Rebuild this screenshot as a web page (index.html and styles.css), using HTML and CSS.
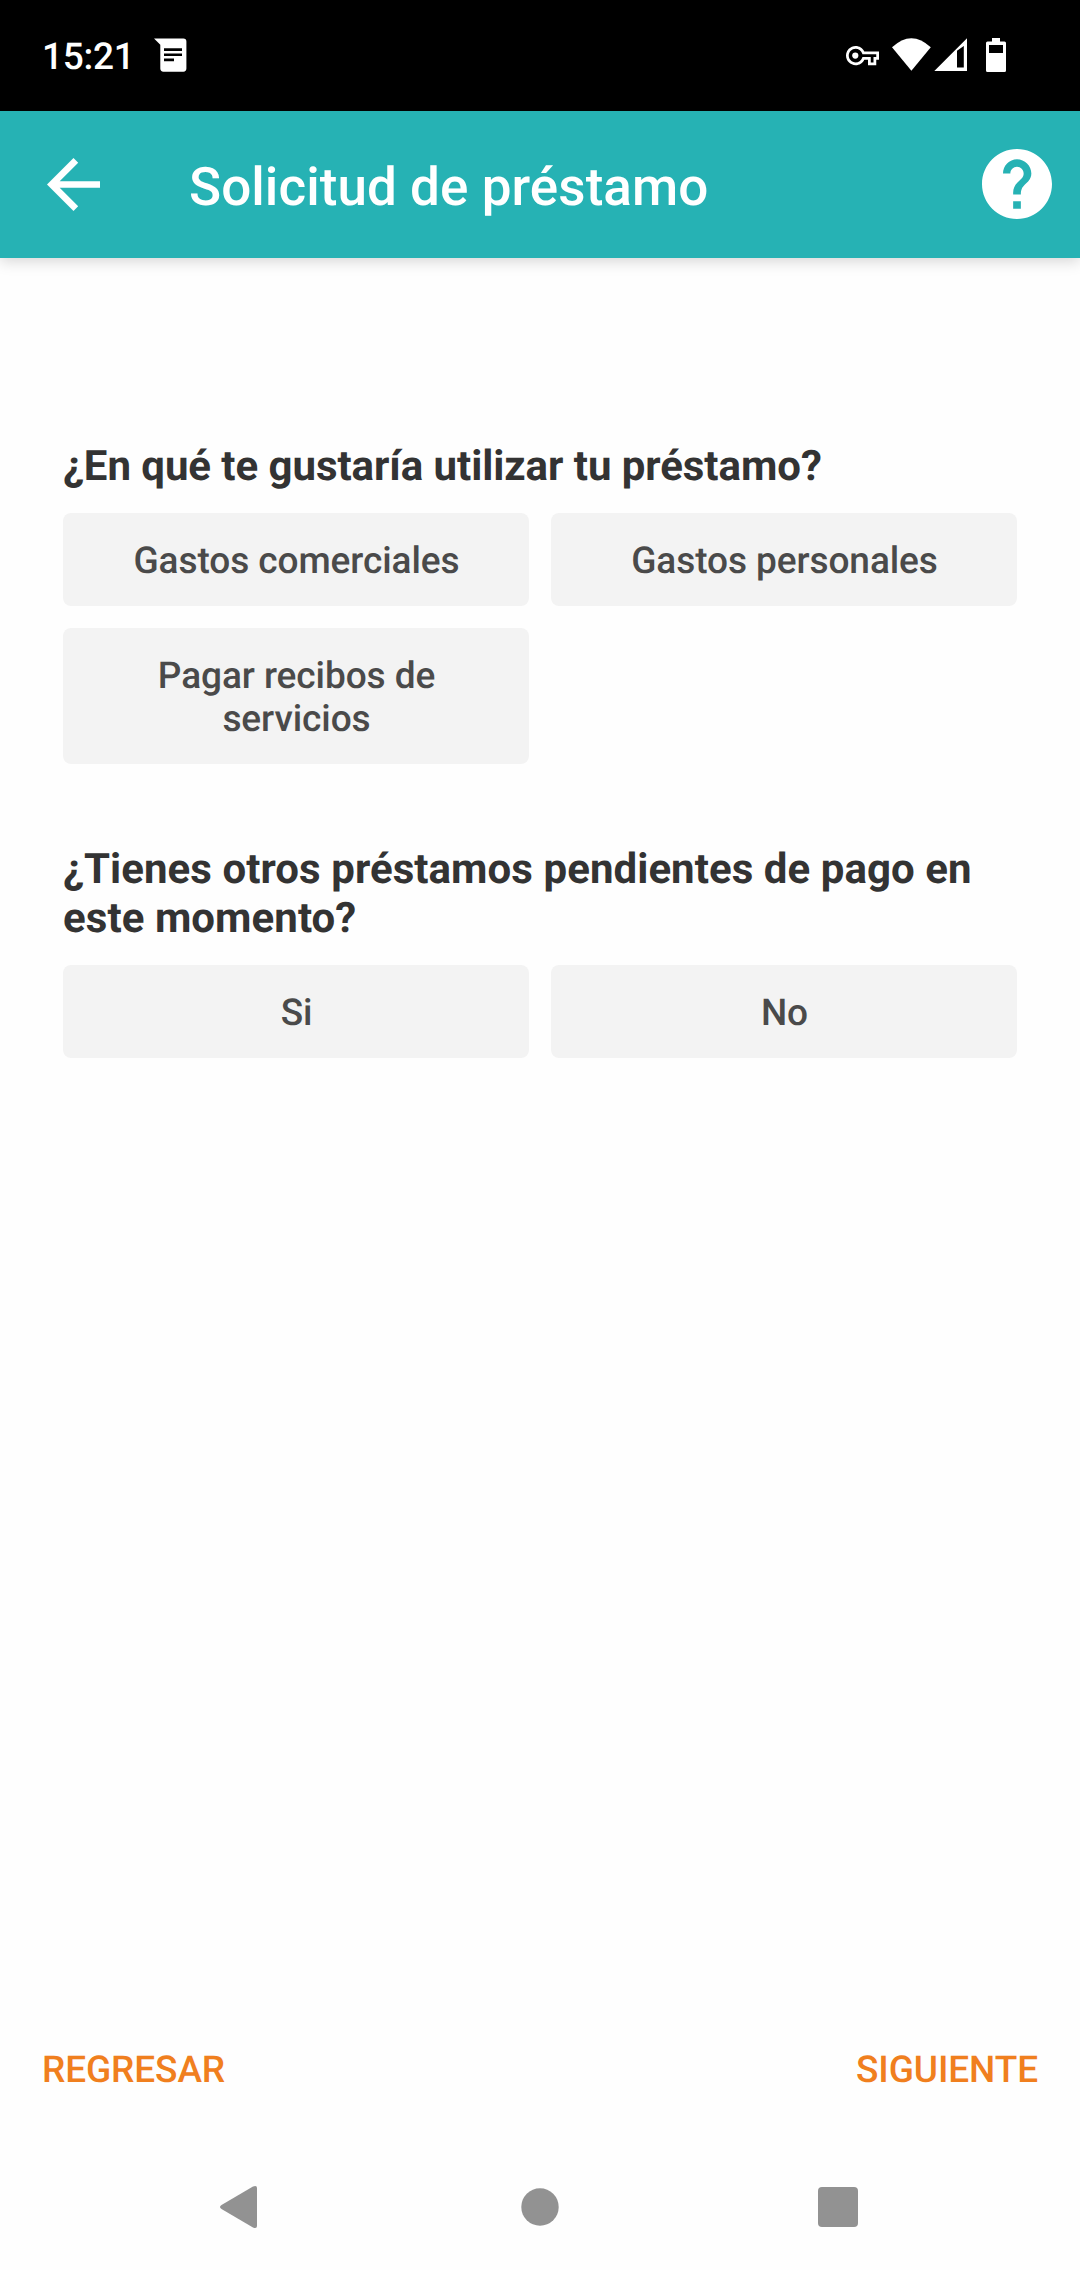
FILE: index.html
```html
<!DOCTYPE html>
<html lang="es">
<head>
<meta charset="utf-8">
<title>Solicitud de préstamo</title>
<link rel="stylesheet" href="styles.css">
</head>
<body>
<div class="status">
  <span class="clock">15:21</span>
  <svg class="note" width="33" height="35" viewBox="0 0 33 35"><path fill="#fff" fill-rule="evenodd" d="M0 .4H29.300Q32.400 .4 32.400 3.500V30.600Q32.400 33.700 29.300 33.700H9.400Q6.300 33.700 6.300 30.600V6.700ZM10 10.300V13H28V10.300ZM10 15.400V18.100H28V15.400ZM10 20.500V23.200H20V20.500Z"/></svg>
  <svg class="signals" width="162" height="35" viewBox="0 0 162 35" fill="#fff" fill-rule="evenodd">
    <path transform="translate(0 1.100) scale(1.375)" d="M22 19h-6v-4h-2.680c-1.140 2.420-3.600 4-6.320 4-3.860 0-7-3.140-7-7s3.140-7 7-7c2.720 0 5.170 1.580 6.320 4H24v6h-2v4zm-4-2h2v-4h2v-2H11.940l-.23-.67C11.010 8.340 9.110 7 7 7c-2.760 0-5 2.240-5 5s2.240 5 5 5c2.110 0 4.010-1.340 4.710-3.330l.23-.67H18v4z"/>
    <circle cx="9.300" cy="17.600" r="3.100"/>
    <path d="M46 9.300Q65.400 -9 84.800 9.300L65.400 32.700Z"/>
    <path d="M88.300 33L121 .3V33ZM111 12.700V29.500H117.800V8Z"/>
    <path d="M146 0H154V3.600H158.500Q160 3.600 160 5.100V32.500Q160 34 158.500 34H141.500Q140 34 140 32.500V5.100Q140 3.600 141.500 3.600H146ZM143 7V15H157V7Z"/>
  </svg>
</div>
<header class="bar">
  <svg class="back" width="53" height="53" viewBox="4 4 16 16"><path fill="#fff" d="M20 11H7.830l5.590-5.590L12 4l-8 8 8 8 1.410-1.410L7.830 13H20v-2z"/></svg>
  <h1>Solicitud de préstamo</h1>
  <svg class="help" width="70" height="70" viewBox="2 2 20 20"><path fill="#fff" d="M12 2C6.480 2 2 6.480 2 12s4.480 10 10 10 10-4.480 10-10S17.520 2 12 2zm1.100 17.100h-2.200v-2.200h2.200v2.200zm2.070-7.850l-.9.920C13.550 12.900 13.100 13.500 13.100 15h-2.200v-.5c0-1.100.45-2.100 1.170-2.830l1.240-1.260c.37-.36.59-.86.59-1.410 0-1.050-.85-1.900-1.900-1.900s-1.900.85-1.900 1.900H8c0-2.260 1.790-4.100 4-4.100s4.100 1.840 4.100 4.100c0 .88-.36 1.680-.93 2.250z"/></svg>
</header>
<main>
  <h2 class="purpose">¿En qué te gustaría utilizar tu préstamo?</h2>
  <div class="options">
    <button>Gastos comerciales</button><button>Gastos personales</button><button class="tall">Pagar recibos de servicios</button>
  </div>
  <h2 class="pending">¿Tienes otros préstamos pendientes de pago en este momento?</h2>
  <div class="options"><button>Si</button><button>No</button></div>
</main>
<footer class="actions"><button>REGRESAR</button><button>SIGUIENTE</button></footer>
<nav class="system">
  <svg width="43" height="44" viewBox="0 0 43 44"><path fill="#929292" d="M34 1.500Q38 0 38 3V41Q38 44 34 42.500L2.500 24Q-.5 22 2.500 20Z"/></svg>
  <svg width="38" height="38" viewBox="0 0 38 38"><circle cx="19" cy="19" r="18.700" fill="#929292"/></svg>
  <svg width="40" height="40" viewBox="0 0 40 40"><rect width="40" height="40" rx="4" fill="#929292"/></svg>
</nav>
</body>
</html>
```
FILE: styles.css
```css
* { box-sizing: border-box; }
body { margin: 0; width: 1080px; height: 2270px; display: flex; flex-direction: column; background: #fefefe; font-family: Roboto, sans-serif; text-rendering: geometricPrecision; overflow: hidden; }
h1, h2 { margin: 0; }
svg { display: block; flex: none; }
button { border: 0; padding: 0; background: none; font: inherit; text-rendering: inherit; }
.status { height: 111px; background: #000; color: #fff; display: flex; align-items: center; padding: 0 72px 0 42px; }
.clock { font-size: 37px; font-weight: 500; letter-spacing: -.3px; width: 112px; padding-top: 3px; }
.signals { margin-left: auto; }
.bar { height: 147px; background: #26b2b4; color: #fff; display: flex; align-items: center; padding: 0 28px 0 47px; box-shadow: 0 3px 14px #0000002b; }
.bar h1 { margin-left: 89px; padding-top: 5px; font-size: 53px; font-weight: 500; letter-spacing: .06px; }
.help { margin: 0 0 1px auto; }
main { flex: 1; padding: 184px 63px 0; }
h2 { font-size: 42px; line-height: 49px; font-weight: 700; color: #333; margin-bottom: 22px; }
.purpose { letter-spacing: -.06px; }
.pending { letter-spacing: .06px; }
.options { display: grid; grid-template-columns: 1fr 1fr; gap: 22px; margin-bottom: 81px; }
.options button { height: 93px; padding: 4px 0 0 1px; border-radius: 8px; background: #f3f3f3; color: #4a4a4a; font-size: 37px; font-weight: 500; line-height: 43px; letter-spacing: -.07px; }
.options .tall { height: 136px; padding: 4px 79px 0 80px; }
.actions { display: flex; justify-content: space-between; padding: 46px 42px 0; height: 160px; }
.actions button { height: 80px; color: #f07f1e; font-size: 37px; font-weight: 500; letter-spacing: -.1px; }
.system { height: 126px; display: flex; justify-content: space-between; align-items: center; padding: 0 222px 0 219px; }
```
